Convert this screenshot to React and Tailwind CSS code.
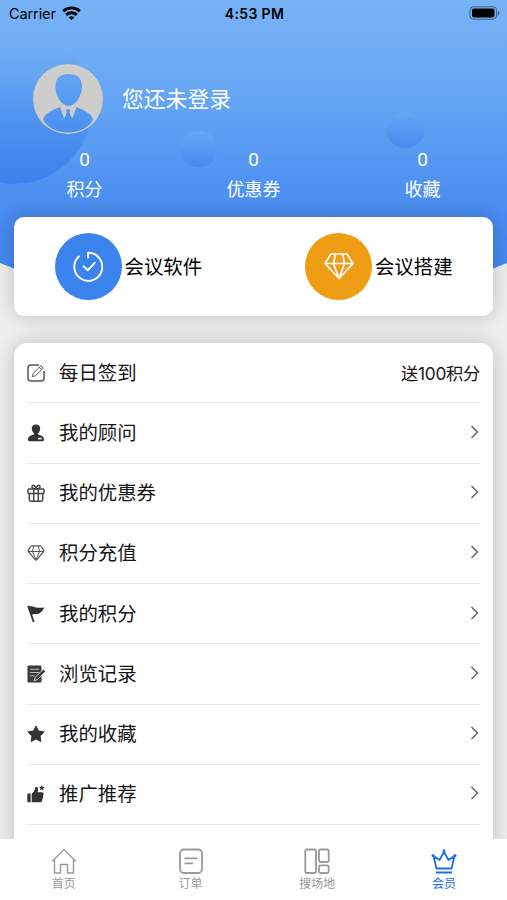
const stats = [
  { value: 0, label: "积分" },
  { value: 0, label: "优惠券" },
  { value: 0, label: "收藏" },
];

const StatusBar = () => (
  <div className="flex shrink-0 justify-between h-7 pl-[9px] pr-[7px] text-black">
    <div className="flex flex-1 items-center gap-[6px] text-[14.5px] tracking-[-0.1px]">
      <span>Carrier</span>
      <svg width="19" height="14" viewBox="0 0 19 14" fill="none" stroke="currentColor" strokeWidth="2.9" className="-mt-0.5">
        <path d="M1.2 5.2C5.800 .8 13.200 .8 17.800 5.200" />
        <path d="M4.200 8.900c3-2.800 7.600-2.800 10.600 0" />
        <path d="M9.500 14 6.600 11.200c1.600-1.400 4.200-1.400 5.800 0z" fill="currentColor" stroke="none" />
      </svg>
    </div>
    <span className="text-[14px] font-semibold leading-7 tracking-[0.35px]">4:53 PM</span>
    <div className="flex flex-1 items-center justify-end -mt-0.5">
      <svg width="31" height="14" viewBox="0 0 31 14">
        <rect x="1" y=".8" width="26.5" height="12.4" rx="3.4" fill="none" stroke="#000" strokeOpacity=".45" />
        <rect x="3" y="2.6" width="22.5" height="8.8" rx="1.8" fill="#000" />
        <path d="M28.8 4.7c2.2.8 2.2 3.8 0 4.6z" fill="#000" fillOpacity=".5" />
      </svg>
    </div>
  </div>
);

// Blue gradient with the curved bottom edge and the bubbles
const HeaderBackground = () => (
  <svg className="absolute left-0 top-0" width="507" height="320" viewBox="0 0 507 320">
    <defs>
      <linearGradient id="sky" gradientUnits="userSpaceOnUse" x1="0" y1="0" x2="0" y2="270">
        <stop offset="0" stopColor="#76b2f5" />
        <stop offset=".22" stopColor="#6eacf4" />
        <stop offset=".5" stopColor="#5c9df2" />
        <stop offset=".78" stopColor="#4a8cf0" />
        <stop offset="1" stopColor="#4287f0" />
      </linearGradient>
      <linearGradient id="bubble" x1="0" y1="0" x2="0" y2="1">
        <stop offset="0" stopColor="#68a7f4" />
        <stop offset="1" stopColor="#468bee" />
      </linearGradient>
      <linearGradient id="bigBubble" x1="0" y1="0" x2="0" y2="1">
        <stop offset=".1" stopColor="#66a5f4" stopOpacity="0" />
        <stop offset=".5" stopColor="#5095f0" stopOpacity=".8" />
        <stop offset="1" stopColor="#3c80ec" />
      </linearGradient>
    </defs>
    <path d="M0 0h507v263Q490 270 470 277Q253 340 37 277Q17 270 0 263z" fill="url(#sky)" />
    <circle cx="14" cy="106" r="78" fill="url(#bigBubble)" />
    <ellipse cx="198.500" cy="149" rx="19" ry="18.200" fill="url(#bubble)" />
    <ellipse cx="405.500" cy="130" rx="19" ry="18.200" fill="url(#bubble)" />
  </svg>
);

const Avatar = () => (
  <svg width="70" height="70" viewBox="0 0 70 70">
    <path
      fill="#cdcdcb"
      fillRule="evenodd"
      d="M35 0a35 35 0 1 1 0 70a35 35 0 0 1 0-70z
        M35.500 10C27 10 22.500 14 22.500 22.500C22.500 32 28.500 42 35.500 42S49 32 49 22.500C49 14 44 10 35.500 10z
        M27 43C19 46.500 12.500 48.500 10 55.500C15 64.500 25 68.500 35 68.500S55 64.500 60.500 55.500C57.500 48.500 51 46.500 43.500 43L39.500 54L35 50L31 54z"
    />
    <path d="M33 45.500h4.200l-.8 2.800 1.500 4.500L35 56l-2.800-3.200 1.600-4.500z" fill="#4c8fee" />
  </svg>
);

const Diamond = () => (
  <svg width="30" height="30" viewBox="0 0 30 30" fill="none" stroke="currentColor" strokeWidth="1.700" strokeLinejoin="round" className="-mt-px">
    <path d="M7 3h16l6 9.500L15 27.500 1 12.500zM1 12.500h28M11.500 3 9.500 12.500l5.500 15 5.500-15-2-9.500" />
  </svg>
);

const EditIcon = () => (
  <svg width="18" height="18" viewBox="0 0 18 18" fill="none" stroke="#555" strokeWidth="1.500">
    <path d="M12 1H4Q1 1 1 4v10q0 3 3 3h10q3 0 3-3V7" />
    <path d="m5.300 12.700.9-3.300 7.600-7.600 2.300 2.300-7.500 7.600zM12.300 3.300l2.300 2.300" strokeWidth="1" />
  </svg>
);

const PersonIcon = () => (
  <svg width="18" height="18" viewBox="0 0 18 18">
    <path
      fill="#333"
      d="M9 .5c3 0 4.500 2 4.200 4.500-.2 2.200-1.300 3.400-2.200 4.200v1.400c3 1 6 1.600 6 4.900 0 1.300-.5 1.700-1.500 1.700h-13c-1 0-1.500-.4-1.500-1.700 0-3.300 3-3.900 6-4.900V9.200C6.100 8.400 5 7.200 4.800 5 4.500 2.500 6 .5 9 .5z"
    />
    <path d="M11 13.800h3.600v1.600H11z" fill="#fff" />
  </svg>
);

const GiftIcon = () => (
  <svg width="18" height="18" viewBox="0 0 18 18" fill="none" stroke="#444" strokeWidth="1.500" strokeLinejoin="round">
    <rect x="1" y="5" width="16" height="4.500" rx="1" />
    <path d="M2.300 9.500v6.300q0 1.400 1.400 1.400h10.600q1.400 0 1.400-1.400V9.500M6.700 5v12M11.300 5v12" />
    <path d="M9 5C6 5 4.500 3.800 5 2.200S8.500 1 9 5c.5-4 3.500-4.400 4-2.800S12 5 9 5z" />
  </svg>
);

const GemIcon = () => (
  <svg width="18" height="18" viewBox="0 0 18 18" fill="none" stroke="#555" strokeWidth="1.200" strokeLinejoin="round">
    <path d="M5 1.800h8q.8 0 1.300.7l2.400 3.600q.5.800-.1 1.500l-6.700 8q-.9 1-1.800 0l-6.700-8q-.6-.7-.1-1.500l2.400-3.600q.5-.7 1.300-.7z" />
    <path d="M1 7.500h16M6.700 2 5.500 7.500 9 16l3.500-8.500L11.300 2" strokeWidth="1" />
  </svg>
);

const FlagIcon = () => (
  <svg width="18" height="18" viewBox="0 0 18 18" fill="#333">
    <path d="M.3 1.200 2 .5l.6.900c3-.9 5.200.9 8 1.300 2.300.3 4.300 0 6.900-.2-1.500 2.700-3.800 5.900-6.500 6.500-2 .4-3.700-.5-5.900.7l2.500 7-1.800.6z" />
  </svg>
);

const RecordIcon = () => (
  <svg width="19" height="18" viewBox="0 0 19 18">
    <path d="M1.500.5h11.800q1.200 0 1.200 1.200v14.600q0 1.200-1.200 1.200H1.500q-1 0-1-1V1.500q0-1 1-1z" fill="#3a3a3a" />
    <path d="M3 4.200h9.300M3 7.500h9.300M3 10.800h4.500" stroke="#bbb" strokeWidth="1.100" />
    <path d="m16.300 4.300 2.200 2.200-8 8-3.300 1.200 1-3.400z" fill="#3a3a3a" stroke="#fff" strokeWidth=".8" />
  </svg>
);

const StarIcon = () => (
  <svg width="18" height="18" viewBox="0 0 18 18" fill="#333" stroke="#333" strokeWidth="1" strokeLinejoin="round">
    <path d="m9 1 2.500 5 5.500.9-4 4 .9 5.700L9 14l-4.900 2.600.9-5.700-4-4L6.500 6z" />
  </svg>
);

const ThumbIcon = () => (
  <svg width="18" height="18" viewBox="0 0 18 18" fill="#333">
    <path d="M1.300 8.500h2.300v8.700H1.300q-1 0-1-1V9.500q0-1 1-1zM4.700 8.500C7 7.500 7.900 5 8 3.300 8.100 1.600 10.600 1.600 11 3.500c.3 1.500-.2 2.800-.4 3.700h4.200c1.500 0 2 1 1.700 2.300l-1.300 6c-.3 1.200-.8 1.700-2 1.700H4.700z" />
    <path d="m14.800.3.9 1.400 1.700.4-1.100 1.300.1 1.700-1.600-.6-1.600.6.100-1.700-1.100-1.300 1.700-.4z" />
  </svg>
);

const menu = [
  { icon: <EditIcon />, label: "每日签到", extra: "送100积分" },
  { icon: <PersonIcon />, label: "我的顾问" },
  { icon: <GiftIcon />, label: "我的优惠券" },
  { icon: <GemIcon />, label: "积分充值" },
  { icon: <FlagIcon />, label: "我的积分" },
  { icon: <RecordIcon />, label: "浏览记录" },
  { icon: <StarIcon />, label: "我的收藏" },
  { icon: <ThumbIcon />, label: "推广推荐" },
];

const tabs = [
  {
    label: "首页",
    icon: <path d="M1 13.500 13 1.500l12 12M3.500 11.500V25h6v-8.500h7V25h6V11.500" strokeWidth="1.400" />,
  },
  {
    label: "订单",
    icon: (
      <>
        <rect x="2" y="1.500" width="22" height="23.500" rx="4" />
        <path d="M6.500 10.300h13M6.500 15.300h8.500" />
      </>
    ),
  },
  {
    label: "搜场地",
    icon: (
      <>
        <rect x="1.300" y="1.500" width="10.700" height="23.500" rx="1.500" />
        <rect x="15" y="1.500" width="9.700" height="12.500" rx="1.500" />
        <rect x="15" y="17.300" width="9.700" height="7.700" rx="1.500" />
      </>
    ),
  },
  {
    label: "会员",
    active: true,
    icon: (
      <>
        <path d="m2.500 8 3 12.500h15l3-12.500-6 4L13 4 8.500 12zM5 24.500h16" />
        <circle cx="13" cy="2.700" r="1.500" fill="currentColor" stroke="none" />
        <circle cx="2" cy="7.500" r="1.500" fill="currentColor" stroke="none" />
        <circle cx="24" cy="7.500" r="1.500" fill="currentColor" stroke="none" />
      </>
    ),
  },
];

const App = () => {
  return (
    <div className="relative flex flex-col w-[507px] h-[900px] overflow-hidden bg-[#eeeeee] font-[Inter,'Noto_Sans_CJK_SC',sans-serif]">
      <HeaderBackground />

      <div className="relative flex flex-col flex-1 min-h-0 overflow-hidden">
        <StatusBar />

        {/* User info */}
        <div className="flex shrink-0 items-center gap-[19px] pl-[33px] mt-9 h-[70px] text-white">
          <Avatar />
          <span className="text-[21.8px] leading-8">您还未登录</span>
        </div>

        <div className="grid shrink-0 grid-cols-3 mt-[14px] h-[69px] text-white text-center">
          {stats.map((item) => (
            <div key={item.label} className="flex flex-col">
              <span className="text-[19px] leading-6 font-[Roboto,sans-serif]">{item.value}</span>
              <span className="text-[18px] leading-6 mt-[6px]">{item.label}</span>
            </div>
          ))}
        </div>

        {/* Services */}
        <div className="flex items-center shrink-0 mx-[14px] h-[99px] rounded-[10px] bg-white text-black shadow-[0_0_20px_rgba(0,0,0,0.2)]">
          <div className="flex items-center w-[251px] pl-[40.5px] gap-[3px]">
            <div className="flex items-center justify-center w-[67px] h-[67px] rounded-full bg-[#3b84ee] text-white">
              <svg width="30" height="32" viewBox="0 0 30 32" fill="none" stroke="currentColor" strokeWidth="1.900" strokeLinecap="round" strokeLinejoin="round">
                <path d="M5.800 5.500A14 14 0 1 0 15 1.800v4.800" />
                <path d="m10.500 15.300 4.200 4 7-7.500" />
              </svg>
            </div>
            <span className="text-[19.4px] pt-0.5">会议软件</span>
          </div>
          <div className="flex items-center flex-1 pl-[40px] gap-[3px]">
            <div className="flex items-center justify-center w-[67px] h-[67px] rounded-full bg-[#f09d16] text-white">
              <Diamond />
            </div>
            <span className="text-[19.4px] pt-0.5">会议搭建</span>
          </div>
        </div>

        {/* Menu list */}
        <div className="shrink-0 mx-[14px] mt-[27px] h-[540px] px-[13px] rounded-t-[13px] bg-white shadow-[0_0_20px_rgba(0,0,0,0.2)]">
          {menu.map((item) => (
            <div key={item.label} className="flex items-center h-[60.25px] border-b border-[#e9e9e9] text-[#161616]">
              <div className="flex w-8">{item.icon}</div>
              <span className="flex-1 text-[19.4px] pt-px">{item.label}</span>
              {item.extra ? (
                <span className="text-[17.3px] tracking-[-0.3px] pt-0.5">{item.extra}</span>
              ) : (
                <svg width="10" height="14" viewBox="0 0 10 14" fill="none" stroke="#666" strokeWidth="1.500" className="-mt-0.5">
                  <path d="m1.500 1 6 6-6 6" />
                </svg>
              )}
            </div>
          ))}
        </div>
      </div>

      {/* Tab bar */}
      <div className="relative grid grid-cols-4 shrink-0 h-[61px] bg-white">
        {tabs.map((tab) => (
          <div key={tab.label} className={`flex flex-col items-center pt-[9px] pl-px ${tab.active ? "text-[#1b6cf0]" : "text-[#999]"}`}>
            <svg width="26" height="27" viewBox="0 0 26 27" fill="none" stroke="currentColor" strokeWidth="1.800" strokeLinejoin="round">
              {tab.icon}
            </svg>
            <span className="text-[12px] leading-4 mt-px">{tab.label}</span>
          </div>
        ))}
      </div>
    </div>
  );
};

export default App;
